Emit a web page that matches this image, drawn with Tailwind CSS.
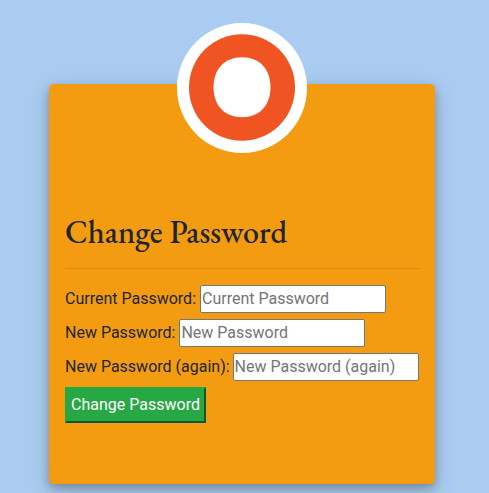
<!DOCTYPE html>
<html lang="en">
<head>
<meta charset="utf-8">
<title>Change Password</title>
<script src="https://cdn.jsdelivr.net/npm/@tailwindcss/browser@4"></script>
</head>
<body class="h-[493px] overflow-hidden bg-[#a9ccf0] pt-[84px] pl-[49px] font-['Roboto',sans-serif] text-base text-[#212529]">
<main class="relative h-[400px] w-[386px] rounded-[5px] bg-[#f39c12] px-4 pt-[129px] shadow-[0_4px_8px_0_rgba(0,0,0,0.2),0_6px_20px_0_rgba(0,0,0,0.19)]">
  <svg class="absolute -top-[61px] left-[128px]" width="130" height="130" viewBox="0 0 130 130" aria-hidden="true">
    <circle cx="65" cy="65" r="65" fill="#fff"/>
    <ellipse cx="65" cy="64.500" rx="53" ry="53.300" fill="#f05423"/>
    <path fill="#fff" d="M65 34.200C82.500 34.200 93.500 46 93.500 64.300C93.500 82.500 82.500 94.300 65 94.300C47.500 94.300 36.500 82.500 36.500 64.300C36.500 46 47.500 34.200 65 34.200Z"/>
  </svg>
  <h1 class="h-[38px] font-['EB_Garamond','Liberation_Serif',serif] text-[32px] leading-[38px] font-medium whitespace-nowrap">Change Password</h1>
  <hr class="mt-[17px] mb-4 border-t border-black/10">
  <form class="flex flex-col items-start gap-1.5">
    <label class="flex h-7 items-center gap-1 whitespace-nowrap">Current Password:
      <input type="password" placeholder="Current Password" class="h-7 w-[186px] rounded-[2px] border border-[#767676] bg-white pb-0.5 pl-px placeholder:text-[#757575]">
    </label>
    <label class="flex h-7 items-center gap-1 whitespace-nowrap">New Password:
      <input type="password" placeholder="New Password" class="h-7 w-[186px] rounded-[2px] border border-[#767676] bg-white pb-0.5 pl-px placeholder:text-[#757575]">
    </label>
    <label class="flex h-7 items-center gap-[3px] whitespace-nowrap">New Password (again):
      <input type="password" placeholder="New Password (again)" class="h-7 w-[186px] rounded-[2px] border border-[#767676] bg-white pb-0.5 pl-px placeholder:text-[#757575]">
    </label>
    <button type="button" class="h-9 w-[141px] border-2 border-t-[#28a745] border-l-[#28a745] border-r-[#145523] border-b-[#145523] bg-[#28a745] text-center whitespace-nowrap text-white">Change Password</button>
  </form>
</main>
</body>
</html>
